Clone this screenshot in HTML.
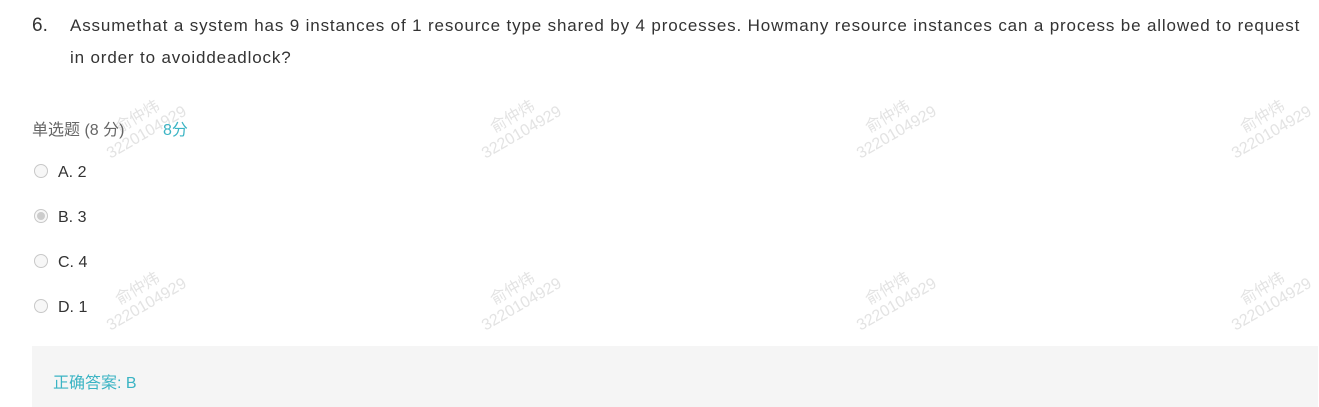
<!DOCTYPE html>
<html><head><meta charset="utf-8"><style>
body{margin:0;width:1319px;height:407px;background:#fff;position:relative;overflow:hidden;font-family:"Liberation Sans","Noto Sans CJK SC",sans-serif;color:#333}
.num{position:absolute;left:32px;top:15px;font-size:19px;color:#333}
.q{position:absolute;left:70px;top:10px;width:1238px;font-size:17px;line-height:32px;color:#333;letter-spacing:0.85px}
.type{position:absolute;left:32px;top:116px;font-size:16px;color:#666}
.score{position:absolute;left:163px;top:116px;font-size:16px;color:#3bb4c4}
.opt{position:absolute;left:34px;font-size:16px;color:#333}
.opt i{display:inline-block;width:12px;height:12px;border:1px solid #c8c8c8;border-radius:50%;background:#f7f7f7;vertical-align:-1px;margin-right:10px;position:relative}
.opt i.on::after{content:"";position:absolute;left:2px;top:2px;width:8px;height:8px;border-radius:50%;background:#ccc}
.ans{position:absolute;left:32px;top:346px;width:1286px;height:61px;background:#f5f5f5}
.ans span{position:absolute;left:21px;top:23px;font-size:16px;color:#3bb4c4}
.wm{position:absolute;transform:rotate(-30deg);transform-origin:left top;color:#e3e3e3;font-size:16px;line-height:18px;text-align:center}
</style></head><body>
<div class="num">6.</div>
<div class="q">Assumethat a system has 9 instances of 1 resource type shared by 4 processes. Howmany resource instances can a process be allowed to request in order to avoiddeadlock?</div>
<div class="wm" style="left:95px;top:132px">俞仲炜<br>3220104929</div>
<div class="wm" style="left:470px;top:132px">俞仲炜<br>3220104929</div>
<div class="wm" style="left:845px;top:132px">俞仲炜<br>3220104929</div>
<div class="wm" style="left:1220px;top:132px">俞仲炜<br>3220104929</div>
<div class="wm" style="left:95px;top:304px">俞仲炜<br>3220104929</div>
<div class="wm" style="left:470px;top:304px">俞仲炜<br>3220104929</div>
<div class="wm" style="left:845px;top:304px">俞仲炜<br>3220104929</div>
<div class="wm" style="left:1220px;top:304px">俞仲炜<br>3220104929</div>
<div class="type">单选题 (8 分)</div>
<div class="score">8分</div>
<div class="opt" style="top:164px"><i></i>A. 2</div>
<div class="opt" style="top:209px"><i class="on"></i>B. 3</div>
<div class="opt" style="top:254px"><i></i>C. 4</div>
<div class="opt" style="top:299px"><i></i>D. 1</div>
<div class="ans"><span>正确答案: B</span></div>
</body></html>
